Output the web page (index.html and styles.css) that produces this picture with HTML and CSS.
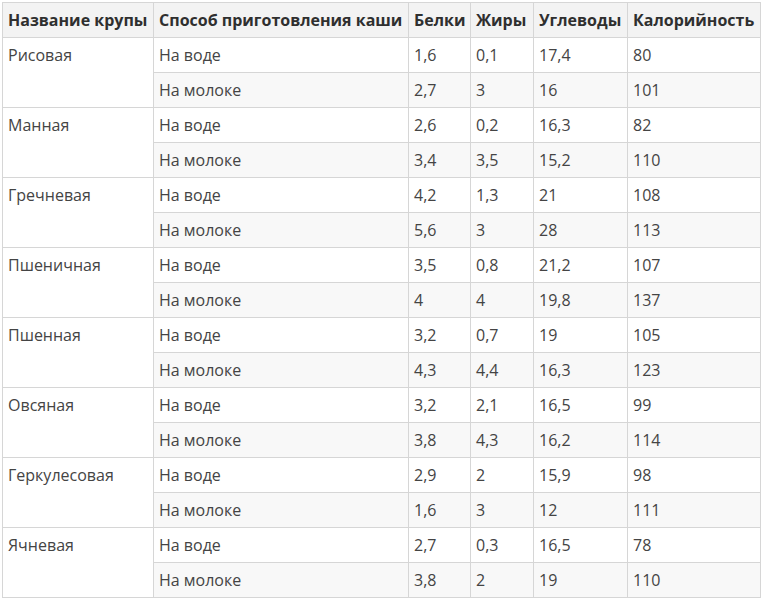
FILE: index.html
```html
<!DOCTYPE html>
<html lang="ru">
<head>
<meta charset="utf-8">
<link rel="stylesheet" href="styles.css">
</head>
<body>
<div class="wrap">
<table class="kasha">
<colgroup>
<col class="c1"><col class="c2"><col class="c3"><col class="c4"><col class="c5"><col class="c6">
</colgroup>
<thead>
<tr><th>Название крупы</th><th>Способ приготовления каши</th><th>Белки</th><th>Жиры</th><th>Углеводы</th><th>Калорийность</th></tr>
</thead>
<tbody>
<tr><td rowspan="2" class="name">Рисовая</td><td>На воде</td><td>1,6</td><td>0,1</td><td>17,4</td><td>80</td></tr>
<tr class="alt"><td>На молоке</td><td>2,7</td><td>3</td><td>16</td><td>101</td></tr>
<tr><td rowspan="2" class="name">Манная</td><td>На воде</td><td>2,6</td><td>0,2</td><td>16,3</td><td>82</td></tr>
<tr class="alt"><td>На молоке</td><td>3,4</td><td>3,5</td><td>15,2</td><td>110</td></tr>
<tr><td rowspan="2" class="name">Гречневая</td><td>На воде</td><td>4,2</td><td>1,3</td><td>21</td><td>108</td></tr>
<tr class="alt"><td>На молоке</td><td>5,6</td><td>3</td><td>28</td><td>113</td></tr>
<tr><td rowspan="2" class="name">Пшеничная</td><td>На воде</td><td>3,5</td><td>0,8</td><td>21,2</td><td>107</td></tr>
<tr class="alt"><td>На молоке</td><td>4</td><td>4</td><td>19,8</td><td>137</td></tr>
<tr><td rowspan="2" class="name">Пшенная</td><td>На воде</td><td>3,2</td><td>0,7</td><td>19</td><td>105</td></tr>
<tr class="alt"><td>На молоке</td><td>4,3</td><td>4,4</td><td>16,3</td><td>123</td></tr>
<tr><td rowspan="2" class="name">Овсяная</td><td>На воде</td><td>3,2</td><td>2,1</td><td>16,5</td><td>99</td></tr>
<tr class="alt"><td>На молоке</td><td>3,8</td><td>4,3</td><td>16,2</td><td>114</td></tr>
<tr><td rowspan="2" class="name">Геркулесовая</td><td>На воде</td><td>2,9</td><td>2</td><td>15,9</td><td>98</td></tr>
<tr class="alt"><td>На молоке</td><td>1,6</td><td>3</td><td>12</td><td>111</td></tr>
<tr><td rowspan="2" class="name">Ячневая</td><td>На воде</td><td>2,7</td><td>0,3</td><td>16,5</td><td>78</td></tr>
<tr class="alt"><td>На молоке</td><td>3,8</td><td>2</td><td>19</td><td>110</td></tr>
</tbody>
</table>
</div>
</body>
</html>
```
FILE: styles.css
```css
html, body {
  margin: 0;
  padding: 0;
  background: #ffffff;
}
.wrap {
  padding: 2px 0 0 2px;
}
.kasha {
  border-collapse: collapse;
  table-layout: fixed;
  width: 758px;
  font-family: "Open Sans", "Liberation Sans", sans-serif;
  font-size: 16px;
  color: #444444;
  border: 1px solid #cfcfcf;
}
.c1 { width: 151px; }
.c2 { width: 255px; }
.c3 { width: 62px; }
.c4 { width: 63px; }
.c5 { width: 94px; }
.c6 { width: 133px; }
.kasha th,
.kasha td {
  border: 1px solid #d6d6d6;
  padding: 0 5px;
  height: 34px;
  text-align: left;
  vertical-align: middle;
  line-height: 22px;
  white-space: nowrap;
  overflow: hidden;
}
.kasha th {
  background: #f3f3f3;
  color: #2f2f2f;
  font-weight: 700;
}
.kasha td.name {
  vertical-align: top;
  padding-top: 6px;
  background: #ffffff;
}
.kasha tr.alt td {
  background: #f8f8f8;
}
```
